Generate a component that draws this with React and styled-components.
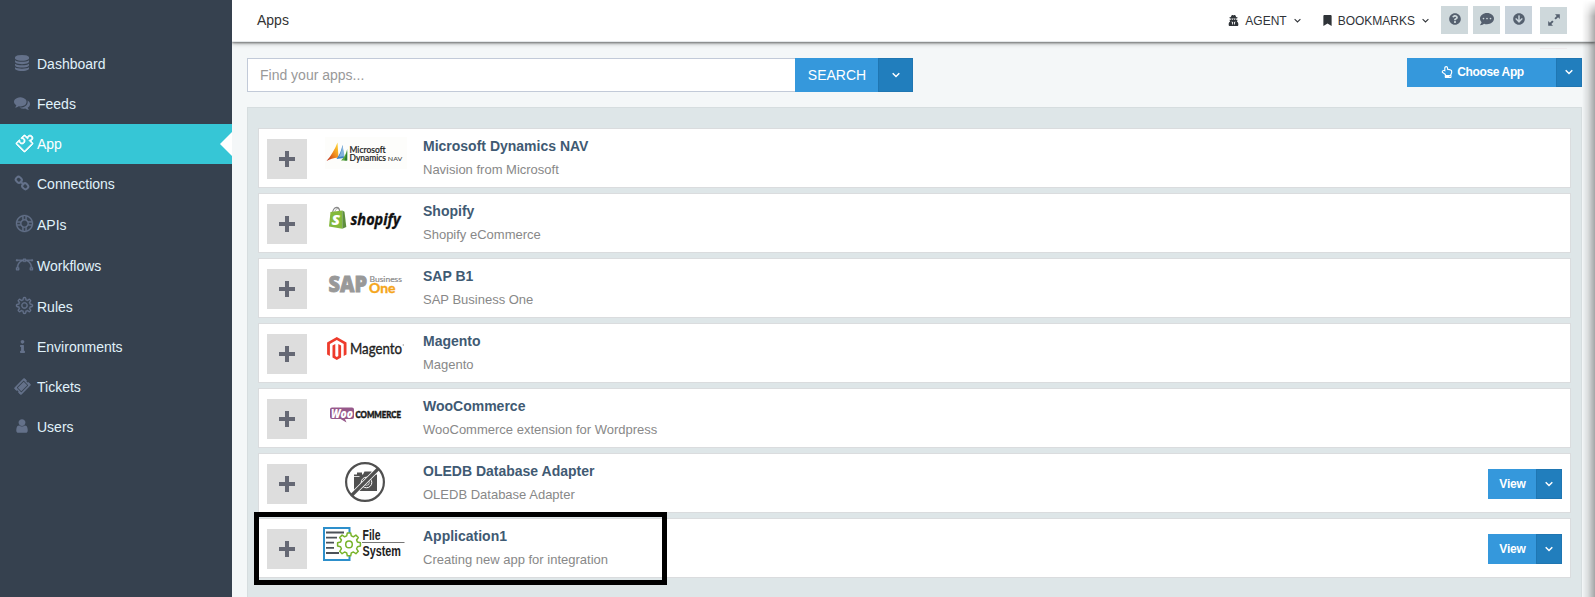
import React from "react";
import styled, { createGlobalStyle } from "styled-components";
import { FaInfo, FaTicketAlt, FaUserSecret, FaBookmark, FaQuestionCircle, FaCommentDots, FaArrowCircleDown, FaRegHandPointUp } from "react-icons/fa";
import { SlPuzzle, SlSupport, SlVector, SlSettings } from "react-icons/sl";

const GlobalStyle = createGlobalStyle`
  * { box-sizing: border-box; }
  body { margin: 0; font-family: "Liberation Sans", Arial, sans-serif; overflow: hidden; }
`;

const Page = styled.div`
  position: relative;
  display: flex;
  width: 100%;
  height: 597px;
  overflow: hidden;
  background: #f4f7f8;
`;

const EdgeShadow = styled.div`
  position: absolute;
  top: 0;
  right: 0;
  width: 13px;
  height: 100%;
  background: linear-gradient(to right, rgba(0, 0, 0, 0), rgba(0, 0, 0, 0.1) 45%, rgba(0, 0, 0, 0.33));
  mask-image: linear-gradient(to bottom, transparent, #000 16px);
`;

const Sidebar = styled.nav`
  position: relative;
  z-index: 1;
  flex: none;
  width: 232px;
  padding-top: 44px;
  background: #36414f;
`;

const NavItem = styled.a`
  position: relative;
  display: flex;
  align-items: center;
  height: ${(p) => (p.$tall ? 41 : 40)}px;
  padding-left: 14px;
  font-size: 14px;
  color: ${(p) => (p.$active ? "#fff" : "#e0f2fb")};
  background: ${(p) => (p.$active ? "#36c6d6" : "transparent")};
  ${(p) =>
    p.$active &&
    `&::after {
      content: "";
      position: absolute;
      right: 0;
      top: 8px;
      border: 12px solid transparent;
      border-left: 0;
      border-right-color: #fff;
    }`}
`;

const NavIcon = styled.span`
  flex: none;
  display: flex;
  justify-content: ${(p) => (p.$line ? "flex-end" : "center")};
  width: ${(p) => (p.$line ? 19 : 16)}px;
  margin-right: ${(p) => (p.$line ? 4 : 7)}px;
  margin-top: -2px;
  color: ${(p) => (p.$active ? "#fff" : "#64718a")};
  ${(p) => p.$line && `svg { stroke: currentColor; stroke-width: ${p.$active ? 50 : 22}px; overflow: visible; }`}
`;

const Main = styled.main`
  flex: 1;
  min-width: 0;
  display: flex;
  flex-direction: column;
`;

const Header = styled.header`
  flex: none;
  display: flex;
  align-items: flex-start;
  height: 42px;
  padding: 6px 28px 0 25px;
  background: #fff;
  border-bottom: 1px solid #e4e8ea;
  box-shadow: 0 1px 5px rgba(0, 0, 0, 0.35), 0 1px 2px rgba(0, 0, 0, 0.4);
`;

const PageTitle = styled.h1`
  flex: 1;
  margin: 0;
  font-size: 14px;
  font-weight: 400;
  line-height: 28px;
  color: #333;
`;

const HeaderLink = styled.a`
  display: flex;
  align-items: center;
  height: 29px;
  font-size: 12px;
  color: #2f3338;
  margin-right: ${(p) => p.$after}px;
`;

const HeaderLabel = styled.span`
  margin: 0 7px 0 ${(p) => p.$gap}px;
`;

const ToolButton = styled.button`
  position: relative;
  display: flex;
  align-items: center;
  justify-content: center;
  width: 27px;
  height: ${(p) => (p.$short ? 27 : 28)}px;
  margin: ${(p) => (p.$short ? "1px 0 0 8px" : "0 0 0 5px")};
  padding: 0 0 ${(p) => (p.$short ? 1 : 2)}px;
  border: 0;
  color: #55606f;
  background: ${(p) => (p.$blue ? "#cad4dc" : "#ced8db")};
  ${(p) =>
    p.$short &&
    `&::after {
      content: "";
      position: absolute;
      left: 0;
      top: 41px;
      width: 100%;
      height: 1px;
      background: #eeebed;
    }`}
`;

const Toolbar = styled.div`
  flex: none;
  display: flex;
  justify-content: space-between;
  align-items: flex-start;
  padding: 16px 13px 15px 15px;
`;

const SearchGroup = styled.div`
  display: flex;
  height: 34px;
`;

const SearchInput = styled.input`
  width: 548px;
  padding: 0 12px;
  border: 1px solid #c2cad8;
  border-right: 0;
  font: 14px "Liberation Sans", Arial, sans-serif;
  background: #fff;
  outline: 0;
  &::placeholder { color: #999; opacity: 1; }
`;

const Button = styled.button`
  display: flex;
  align-items: center;
  justify-content: center;
  gap: 4px;
  width: ${(p) => p.$w}px;
  height: ${(p) => p.$h}px;
  padding: 0 0 ${(p) => p.$lift || 0}px ${(p) => p.$push || 0}px;
  border: ${(p) => (p.$dark ? "1px solid #1f76b2" : "0")};
  font: ${(p) => p.$font || "14px"} "Liberation Sans", Arial, sans-serif;
  letter-spacing: ${(p) => p.$spacing || 0}px;
  color: #fff;
  background: ${(p) => (p.$dark ? "#217ebd" : "#3598dc")};
`;

const ButtonGroup = styled.div`
  display: flex;
`;

const Panel = styled.section`
  flex: 1;
  display: flex;
  flex-direction: column;
  gap: 5px;
  margin: 0 13px 0 15px;
  padding: 20px 10px 0;
  border: 1px solid #d6dddf;
  border-bottom: 0;
  background: #dee6e8;
`;

const Card = styled.article`
  position: relative;
  flex: none;
  display: flex;
  height: 60px;
  padding: 0 8px;
  background: #fff;
  border: 1px solid #dadcde;
`;

const AddButton = styled.button`
  display: flex;
  align-items: center;
  justify-content: center;
  width: 40px;
  height: 40px;
  margin: 10px 13px 0 0;
  padding: 0;
  border: 0;
  background: #ddd;
`;

const CardText = styled.div`
  flex: 1;
  padding: 7px 0 0 13px;
`;

const CardTitle = styled.h2`
  margin: 0 0 4px;
  font-size: 14px;
  line-height: 20px;
  font-weight: 700;
  color: #3f5a73;
`;

const CardSub = styled.p`
  margin: 0;
  font-size: 13px;
  line-height: 20px;
  color: #888;
`;

const CardActions = styled.div`
  display: flex;
  margin-top: 15px;
`;

const Highlight = styled.div`
  position: absolute;
  left: -5px;
  top: -7px;
  width: 413px;
  height: 73px;
  border: 5px solid #000;
  pointer-events: none;
`;

const LogoArt = styled.svg`
  flex: none;
  width: 90px;
  height: 56px;
  overflow: visible;
`;

const Chevron = ({ size = 8, weight = 1.5 }) => (
  <svg width={size} height={size * 0.75} viewBox="0 0 8 6" fill="none" stroke="currentColor" strokeWidth={weight}>
    <path d="M.7 1.2 4 4.5 7.3 1.2" />
  </svg>
);

const ExpandArrows = () => (
  <svg width="12" height="12" viewBox="0 0 12 12" fill="currentColor">
    <path d="M7 .2h4.800V5L10.100 3.300 7.800 5.600 6.400 4.200 8.700 1.900zM5 11.800H.2V7l1.700 1.700 2.300-2.300 1.400 1.400-2.300 2.300z" />
  </svg>
);

const Database = () => (
  <svg width="14" height="16" viewBox="0 0 1536 1792" fill="currentColor" preserveAspectRatio="none">
    <path d="M768 768q237 0 443-43t325-127v170q0 69-103 128t-280 93.5-385 34.5-385-34.5-280-93.5-103-128v-170q119 84 325 127t443 43zm0 768q237 0 443-43t325-127v170q0 69-103 128t-280 93.5-385 34.5-385-34.5-280-93.5-103-128v-170q119 84 325 127t443 43zm0-384q237 0 443-43t325-127v170q0 69-103 128t-280 93.5-385 34.5-385-34.5-280-93.5-103-128v-170q119 84 325 127t443 43zm0-1152q208 0 385 34.5t280 93.5 103 128v128q0 69-103 128t-280 93.5-385 34.5-385-34.5-280-93.5-103-128v-128q0-69 103-128t280-93.5 385-34.5z" />
  </svg>
);

const Comments = () => (
  <svg width="16" height="16" viewBox="0 0 1792 1792" fill="currentColor">
    <path d="M1408 768q0 139-94 257t-256.5 186.5-353.5 68.5q-86 0-176-16-124 88-278 128-36 9-86 16h-3q-11 0-20.5-8t-11.5-21q-1-3-1-6.5t.5-6.5 2-6l2.5-5 3.5-5.5 4-5 4.5-5 4-4.5q5-6 23-25t26-29.5 22.5-29 25-38.5 20.5-44q-124-72-195-177t-71-224q0-139 94-257t256.5-186.5 353.5-68.5 353.5 68.5 256.5 186.5 94 257zm384 256q0 120-71 224.5t-195 176.5q10 24 20.5 44t25 38.5 22.5 29 26 29.5 23 25q1 1 4 4.5t4.500 5 4 5 3.500 5.500l2.500 5 2 6 .5 6.500-1 6.500q-3 14-13 22t-22 7q-50-7-86-16-154-40-278-128-90 16-176 16-271 0-472-132 58 4 88 4 161 0 309-45t264-129q125-92 192-212t67-254q0-77-23-152 129 71 204 178t75 230z" />
  </svg>
);

const Person = () => (
  <svg width="12" height="16" viewBox="0 0 1280 1792" fill="currentColor">
    <path d="M1280 1399q0 109-62.5 187t-150.5 78h-854q-88 0-150.5-78t-62.5-187q0-85 8.5-160.5t31.5-152 58.5-131 94-89 134.5-34.5q131 128 313 128t313-128q76 0 134.5 34.5t94 89 58.5 131 31.5 152 8.5 160.5zm-256-887q0 159-112.5 271.5t-271.5 112.5-271.5-112.5-112.5-271.5 112.5-271.5 271.5-112.5 271.5 112.5 112.5 271.5z" />
  </svg>
);

const Chain = () => (
  <svg width="16" height="16" viewBox="0 0 16 16" fill="none" stroke="currentColor" strokeWidth="2">
    <rect x="1.8" y="2.2" width="6" height="5.200" rx="2.200" transform="rotate(45 4.800 4.800)" />
    <rect x="8.200" y="8.600" width="6" height="5.200" rx="2.200" transform="rotate(45 11.200 11.200)" />
    <path d="m6 6 4 4" strokeWidth="1.800" />
  </svg>
);

const Plus = () => (
  <svg width="16" height="16" fill="#656874">
    <path d="M6 0h4v6h6v4h-6v6H6v-6H0V6h6z" />
  </svg>
);

const LogoSvg = ({ children }) => <LogoArt viewBox="0 0 90 56">{children}</LogoArt>;

const DynamicsLogo = () => (
  <LogoSvg>
    <defs>
      <linearGradient id="sail" x1="0" y1="1" x2="1" y2="0">
        <stop offset="0" stopColor="#b9231b" />
        <stop offset=".5" stopColor="#f08a1c" />
        <stop offset="1" stopColor="#ffe23a" />
      </linearGradient>
    </defs>
    <path fill="#fdfdfb" d="M5 8h82v32H5z" />
    <path fill="url(#sail)" d="M6.500 32 C11 27 15 20 17.500 13.500 L18.500 28.500 C13 29 10 30 6.500 32Z" />
    <path fill="#3c82c4" d="M16.500 30c3-4 5-9 6-14l1.500 13z" />
    <path fill="#86b4dd" d="M19 28c2-4 3-8 3.500-12l2 11z" />
    <path fill="#5ca83b" d="M21 31.500c3-3 5-6 6.200-11.500v11.500z" />
    <path fill="#2e7d32" d="M24.500 31.500 27.200 22v9.500z" />
    <g fontFamily="Lato, sans-serif" fill="#222" fontWeight="500">
      <text x="29.500" y="23.800" fontSize="9.500" stroke="#222" strokeWidth=".2" textLength="36" lengthAdjust="spacingAndGlyphs">Microsoft</text>
      <text x="29.500" y="32" fontSize="9.500" stroke="#222" strokeWidth=".2" textLength="36.500" lengthAdjust="spacingAndGlyphs">Dynamics</text>
      <text x="67.800" y="32.300" fontSize="6.500" fill="#444" textLength="14.500" lengthAdjust="spacingAndGlyphs">NAV</text>
    </g>
  </LogoSvg>
);

const ShopifyLogo = () => (
  <LogoSvg>
    <path d="M12.500 20c0-4 2-6.500 4.200-6.500s3 2 3 5" fill="none" stroke="#888" strokeWidth="1.300" />
    <path d="M14.500 19c.5-3 2-4.500 3.500-4.500" fill="none" stroke="#999" strokeWidth=".8" />
    <path d="m10.500 18 11.800-1.500v18.300L9 32.500z" fill="#84b93c" />
    <path d="m22.300 16.500 2.200 1.300L26.300 33l-4 1.800z" fill="#5e8e3e" />
    <text x="11.500" y="31" fontFamily="Open Sans, sans-serif" fontWeight="800" fontStyle="italic" fontSize="14" fill="#fff" textLength="8.500" lengthAdjust="spacingAndGlyphs">S</text>
    <text x="30.500" y="30.500" fontFamily="Open Sans, sans-serif" fontWeight="700" fontStyle="italic" fontSize="16" fill="#111" stroke="#111" strokeWidth=".3" textLength="50" lengthAdjust="spacingAndGlyphs">shopify</text>
  </LogoSvg>
);

const SapLogo = () => (
  <LogoSvg>
    <text x="8.500" y="33" fontFamily="Open Sans, sans-serif" fontWeight="800" fontSize="22" fill="#999" stroke="#999" strokeWidth=".9" textLength="38.500" lengthAdjust="spacingAndGlyphs">SAP</text>
    <text x="49.500" y="22.500" fontFamily="Lato, sans-serif" fontSize="8" fill="#8c8c8c" stroke="#8c8c8c" strokeWidth=".2" textLength="32.500" lengthAdjust="spacingAndGlyphs">Business</text>
    <text x="49" y="33.500" fontFamily="Lato, sans-serif" fontWeight="700" fontSize="13.500" fill="#f5a61c" stroke="#f5a61c" strokeWidth=".4" textLength="26.500" lengthAdjust="spacingAndGlyphs">One</text>
  </LogoSvg>
);

const MagentoLogo = () => (
  <LogoSvg>
    <path d="m16.800 13 9.700 5.500v12L23.700 32V20l-6.900-4-6.900 4v12l-2.800-1.500v-12z" fill="#ee3b2c" />
    <path d="M12.500 21.500 15.300 20v12l1.500.9 1.500-.9V20l2.800 1.500v12l-4.300 2.500-4.300-2.500z" fill="#ee3b2c" />
    <text x="30" y="29.800" fontFamily="Lato, sans-serif" fontSize="15" fill="#222" stroke="#222" strokeWidth=".35" textLength="52" lengthAdjust="spacingAndGlyphs">Magento</text>
    <circle cx="83.300" cy="21" r=".7" fill="#999" />
  </LogoSvg>
);

const WooLogo = () => (
  <LogoSvg>
    <path d="M12 18.500h20q2 0 2 2V28q0 2-2 2h-7l1.500 3.500-6-3.500H12q-2 0-2-2v-7.500q0-2 2-2z" fill="#96588a" />
    <text x="11" y="29" fontFamily="Open Sans, sans-serif" fontWeight="800" fontStyle="italic" fontSize="11.500" fill="#fff" textLength="22" lengthAdjust="spacingAndGlyphs">Woo</text>
    <text x="35.500" y="28.500" fontFamily="Lato, sans-serif" fontWeight="900" fontSize="10" fill="#181818" stroke="#181818" strokeWidth=".5" textLength="45.500" lengthAdjust="spacingAndGlyphs">COMMERCE</text>
  </LogoSvg>
);

const NoImageLogo = () => (
  <LogoSvg>
    <path d="M34 20.500h3v-2h5v2h1l1.500-3h7l1.500 3h4v16.500H34z" fill="#505050" />
    <circle cx="46.500" cy="28.500" r="5.300" fill="none" stroke="#fff" strokeWidth="1" />
    <circle cx="46.500" cy="28.500" r="2.800" fill="none" stroke="#fff" strokeWidth=".7" />
    <path d="M34 22.500h5.500" stroke="#fff" strokeWidth=".8" />
    <path d="M31.500 41.500 58.500 14.500" stroke="#fff" strokeWidth="4.800" />
    <path d="M31.500 41.500 58.500 14.500" stroke="#505050" strokeWidth="3.200" />
    <circle cx="45" cy="28" r="18.900" fill="none" stroke="#505050" strokeWidth="2.200" />
  </LogoSvg>
);

const FileSystemLogo = () => (
  <LogoSvg>
    <path d="M29.500 14V9H4v32h25.500v-5" fill="none" stroke="#2d8fcb" strokeWidth="2" />
    <path d="M6 13.500h18M6 18.600h11M6 23.700h8M6 28.800h8M6 34h13" stroke="#4b5158" strokeWidth="1.800" />
    <g fill="#fff" stroke="#78b32a" strokeWidth="1.500" strokeLinejoin="round">
      <path d="M27.300 14h3.400l.6 2.900 2.100.9 2.500-1.700 2.400 2.400-1.700 2.500.9 2.100 2.900.6v3.400l-2.900.6-.9 2.100 1.700 2.500-2.400 2.400-2.500-1.700-2.100.9-.6 2.900h-3.400l-.6-2.900-2.100-.9-2.500 1.700-2.400-2.400 1.700-2.500-.9-2.100-2.900-.6v-3.400l2.900-.6.9-2.100-1.700-2.500 2.400-2.400 2.500 1.700 2.100-.9z" />
      <circle cx="29" cy="25.400" r="3.300" />
    </g>
    <path d="M42 23.500h42.500" stroke="#777" />
    <g fontFamily="Liberation Sans, sans-serif" fontWeight="700" fill="#222">
      <text x="42.500" y="20.800" fontSize="15" textLength="18" lengthAdjust="spacingAndGlyphs">File</text>
      <text x="42.500" y="37.300" fontSize="14.500" textLength="38.500" lengthAdjust="spacingAndGlyphs">System</text>
    </g>
  </LogoSvg>
);

const navItems = [
  { label: "Dashboard", icon: <Database /> },
  { label: "Feeds", icon: <Comments /> },
  { label: "App", icon: <SlPuzzle size={17} />, line: true, active: true },
  { label: "Connections", icon: <Chain /> },
  { label: "APIs", icon: <SlSupport size={17} />, line: true, tall: true },
  { label: "Workflows", icon: <SlVector size={17} />, line: true, tall: true },
  { label: "Rules", icon: <SlSettings size={17} />, line: true, tall: true },
  { label: "Environments", icon: <FaInfo size={13} /> },
  { label: "Tickets", icon: <FaTicketAlt size={15} transform="rotate(-45)" /> },
  { label: "Users", icon: <Person /> },
];

const apps = [
  { title: "Microsoft Dynamics NAV", sub: "Navision from Microsoft", Logo: DynamicsLogo },
  { title: "Shopify", sub: "Shopify eCommerce", Logo: ShopifyLogo },
  { title: "SAP B1", sub: "SAP Business One", Logo: SapLogo },
  { title: "Magento", sub: "Magento", Logo: MagentoLogo },
  { title: "WooCommerce", sub: "WooCommerce extension for Wordpress", Logo: WooLogo },
  { title: "OLEDB Database Adapter", sub: "OLEDB Database Adapter", Logo: NoImageLogo, view: true },
  { title: "Application1", sub: "Creating new app for integration", Logo: FileSystemLogo, view: true, marked: true },
];

const AppCard = ({ title, sub, Logo, view, marked }) => (
  <Card>
    <AddButton aria-label="Expand"><Plus /></AddButton>
    <Logo />
    <CardText>
      <CardTitle>{title}</CardTitle>
      <CardSub>{sub}</CardSub>
    </CardText>
    {view && (
      <CardActions>
        <Button $w={48} $h={30} $font="bold 12px" $lift={1} $push={1} $spacing={-0.2}>View</Button>
        <Button $w={26} $h={30} $dark><Chevron /></Button>
      </CardActions>
    )}
    {marked && <Highlight />}
  </Card>
);

export default function App() {
  return (
    <Page>
      <GlobalStyle />
      <Sidebar>
        {navItems.map((n) => (
          <NavItem key={n.label} $active={n.active} $tall={n.tall}>
            <NavIcon $line={n.line} $active={n.active}>{n.icon}</NavIcon>
            {n.label}
          </NavItem>
        ))}
      </Sidebar>
      <Main>
        <Header>
          <PageTitle>Apps</PageTitle>
          <HeaderLink $after={21}>
            <FaUserSecret size={11} /><HeaderLabel $gap={6}>AGENT</HeaderLabel><Chevron size={7} weight={1.2} />
          </HeaderLink>
          <HeaderLink $after={7}>
            <FaBookmark size={11} /><HeaderLabel $gap={5}>BOOKMARKS</HeaderLabel><Chevron size={7} weight={1.2} />
          </HeaderLink>
          <ToolButton $first><FaQuestionCircle size={12} /></ToolButton>
          <ToolButton><FaCommentDots size={14} /></ToolButton>
          <ToolButton $blue><FaArrowCircleDown size={12} /></ToolButton>
          <ToolButton $short><ExpandArrows /></ToolButton>
        </Header>
        <Toolbar>
          <SearchGroup>
            <SearchInput placeholder="Find your apps..." />
            <Button $w={83} $h={34} $push={1}>SEARCH</Button>
            <Button $w={35} $h={34} $dark><Chevron /></Button>
          </SearchGroup>
          <ButtonGroup>
            <Button $w={149} $h={29} $font="bold 12px" $lift={2} $push={2} $spacing={-0.35}><FaRegHandPointUp size={12} />Choose App</Button>
            <Button $w={26} $h={29} $dark $lift={1}><Chevron /></Button>
          </ButtonGroup>
        </Toolbar>
        <Panel>
          {apps.map((a) => <AppCard key={a.title} {...a} />)}
        </Panel>
      </Main>
      <EdgeShadow />
    </Page>
  );
}
